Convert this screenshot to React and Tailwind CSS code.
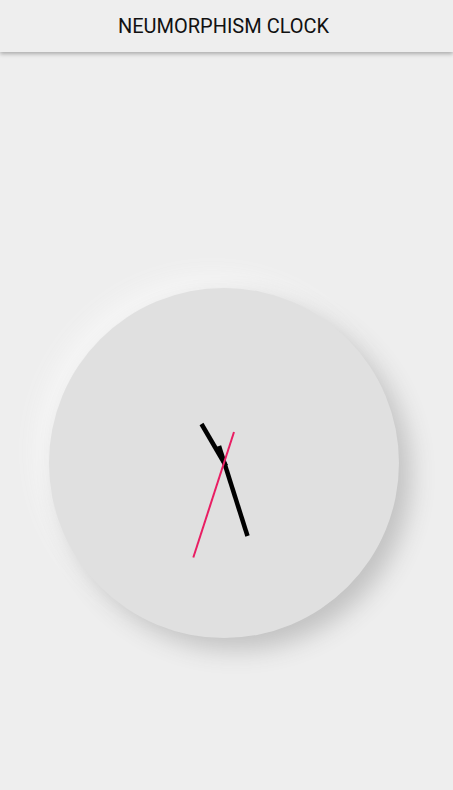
import React from "react";

export default function App() {
  return (
    <div className="min-h-[790px] w-full bg-[#eeeeee]" style={{ fontFamily: "Roboto, 'Liberation Sans', sans-serif" }}>
      <header className="h-[52px] w-full bg-[#eeeeee] flex items-center justify-center shadow-[0_2px_4px_rgba(0,0,0,0.28)] relative z-10">
        <h1 className="ml-[-6px] text-[20px] leading-none text-[#111] tracking-normal" style={{ fontFamily: "Roboto, 'Liberation Sans', sans-serif" }}>
          NEUMORPHISM CLOCK
        </h1>
      </header>
      <main className="flex justify-center pt-[236px]">
        <div className="relative ml-[-5px] h-[350px] w-[350px] rounded-full bg-[#e0e0e0] shadow-[12px_12px_24px_#c2c2c2,-12px_-12px_24px_#f6f6f6]">
          <svg className="absolute inset-0" width="350" height="350" viewBox="49 288 350 350">
            <line x1="201.5" y1="424" x2="226" y2="466" stroke="#000" strokeWidth="4.5" strokeLinecap="butt" />
            <line x1="219" y1="446" x2="247.5" y2="536" stroke="#000" strokeWidth="4.5" strokeLinecap="butt" />
            <line x1="234" y1="432" x2="193.3" y2="557.5" stroke="#e91e63" strokeWidth="2" strokeLinecap="butt" />
          </svg>
        </div>
      </main>
    </div>
  );
}
